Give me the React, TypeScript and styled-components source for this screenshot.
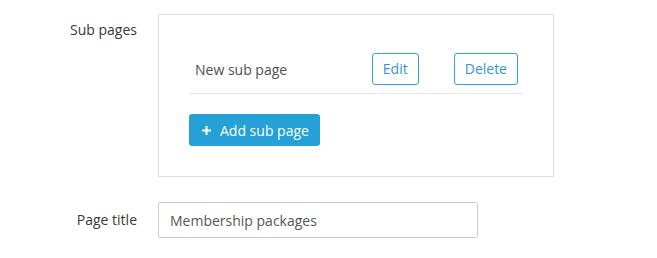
import React from "react";
import styled, { createGlobalStyle } from "styled-components";

const Global = createGlobalStyle`
  html, body { margin: 0; padding: 0; background: #fff; }
  body { font-family: "Open Sans", "Noto Sans", sans-serif; font-size: 14px; color: #444; }
  * { box-sizing: border-box; }
`;

const Form = styled.div`
  display: flex;
  flex-direction: column;
  gap: 25px;
  padding-top: 14px;
`;

const Field = styled.div<{ $center?: boolean }>`
  display: grid;
  grid-template-columns: 137px auto;
  column-gap: 21px;
  align-items: ${(p) => (p.$center ? "center" : "start")};
`;

const Label = styled.label<{ $top?: number }>`
  text-align: right;
  font-size: 14px;
  line-height: 20px;
  color: #383838;
  padding-top: ${(p) => p.$top ?? 0}px;
`;

const Panel = styled.div`
  width: 396px;
  border: 1px solid #d8e1e8;
  padding: 30px 30px 30px 30px;
`;

const Row = styled.div`
  display: flex;
  align-items: center;
  height: 49px;
  border-bottom: 1px solid #e3e7eb;
  padding: 0 5px 0 6px;
  margin-bottom: 20px;
`;

const Name = styled.span`
  flex: 1;
  color: #505050;
  font-size: 14px;
`;

const Actions = styled.div`
  display: flex;
  gap: 35px;
`;

const OutlineButton = styled.button`
  height: 32px;
  padding: 0 10px;
  border: 1px solid #2da3da;
  border-radius: 3px;
  background: #fff;
  color: #3593cf;
  font-family: inherit;
  font-size: 14px;
  line-height: 20px;
  cursor: pointer;
`;

const PrimaryButton = styled.button`
  display: inline-flex;
  align-items: center;
  gap: 9px;
  height: 32px;
  width: 131px;
  padding: 0 0 0 13px;
  border: none;
  border-radius: 3px;
  background: #25a1d8;
  color: #fff;
  font-family: inherit;
  font-size: 14px;
  cursor: pointer;
`;

const Plus = styled.svg`
  width: 9px;
  height: 9px;
`;

const Input = styled.input`
  width: 320px;
  height: 36px;
  border: 1px solid #cccccc;
  border-radius: 2px;
  padding: 0 11px;
  font-family: inherit;
  font-size: 14px;
  color: #555;
  outline: none;
`;

export default function App() {
  return (
    <>
      <Global />
      <Form>
        <Field>
          <Label $top={6}>Sub pages</Label>
          <Panel>
            <Row>
              <Name>New sub page</Name>
              <Actions>
                <OutlineButton>Edit</OutlineButton>
                <OutlineButton>Delete</OutlineButton>
              </Actions>
            </Row>
            <PrimaryButton>
              <Plus viewBox="0 0 9 9">
                <path d="M4.5 0v9M0 4.5h9" stroke="#fff" strokeWidth="2" />
              </Plus>
              Add sub page
            </PrimaryButton>
          </Panel>
        </Field>
        <Field $center>
          <Label>Page title</Label>
          <Input defaultValue="Membership packages" />
        </Field>
      </Form>
    </>
  );
}
